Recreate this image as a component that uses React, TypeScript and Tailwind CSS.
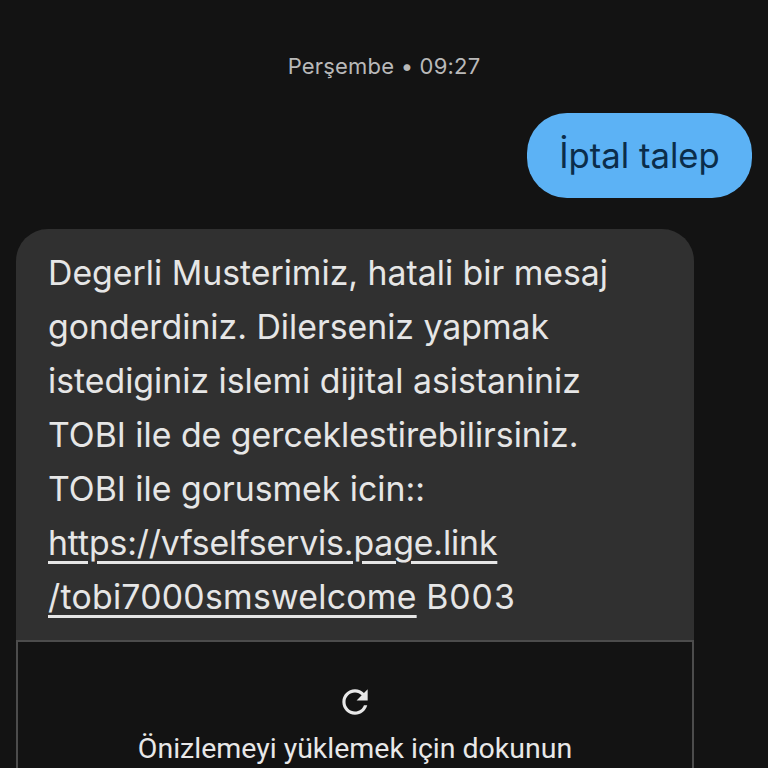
import React from "react";

const lines: React.ReactNode[] = [
  "Degerli Musterimiz, hatali bir mesaj",
  "gonderdiniz. Dilerseniz yapmak",
  "istediginiz islemi dijital asistaniniz",
  "TOBI ile de gerceklestirebilirsiniz.",
  "TOBI ile gorusmek icin::",
  <span className="underline decoration-[2.5px] underline-offset-[6px] tracking-[-0.13px]">https://vfselfservis.page.link</span>,
  <>
    <span className="underline decoration-[2.5px] underline-offset-[6px] tracking-[0.26px]">/tobi7000smswelcome</span>{" "}
    <span className="tracking-[1px]">B003</span>
  </>,
];

export default function App() {
  return (
    <div className="h-[768px] w-[768px] overflow-hidden bg-[#131313] font-['Inter','Liberation_Sans',sans-serif]">
      <div className="pt-[50px] text-center text-[22px] leading-[32px] tracking-[0.2px] text-[#b9b9b9]">
        Perşembe • 09:27
      </div>
      <div className="mt-[31px] flex justify-end pr-4">
        <div className="flex h-[85px] w-[225px] items-center justify-center rounded-[40px] bg-[#5cb2f5] text-[34.7px] text-[#0b2d4a]">
          İptal talep
        </div>
      </div>
      <div className="ml-4 mt-[31px] w-[678px] overflow-hidden rounded-t-[32px] bg-[#303030]">
        <div className="px-8 pb-[16px] pt-[17px] text-[33.8px] leading-[54px] text-[#e6e6e6]">
          {lines.map((l, i) => (
            <div key={i} className="whitespace-nowrap">
              {l}
            </div>
          ))}
        </div>
        <div className="flex h-[200px] flex-col items-center border-x-2 border-t-2 border-[#4c4c4c] bg-[#131313] pt-[41px]">
          <svg width="38" height="38" viewBox="0 0 24 24" fill="#e8e8e8">
            <path d="M17.65 6.35C16.2 4.9 14.21 4 12 4c-4.42 0-7.99 3.58-7.99 8s3.57 8 7.99 8c3.73 0 6.84-2.55 7.73-6h-2.08c-.82 2.33-3.04 4-5.65 4-3.31 0-6-2.69-6-6s2.69-6 6-6c1.66 0 3.14.69 4.22 1.78L13 11h7V4l-2.35 2.35z" />
          </svg>
          <div className="mt-[12px] font-['Roboto','Liberation_Sans',sans-serif] text-[28.5px] font-[450] leading-[32px] text-[#e8e8e8]">
            Önizlemeyi yüklemek için dokunun
          </div>
        </div>
      </div>
    </div>
  );
}
